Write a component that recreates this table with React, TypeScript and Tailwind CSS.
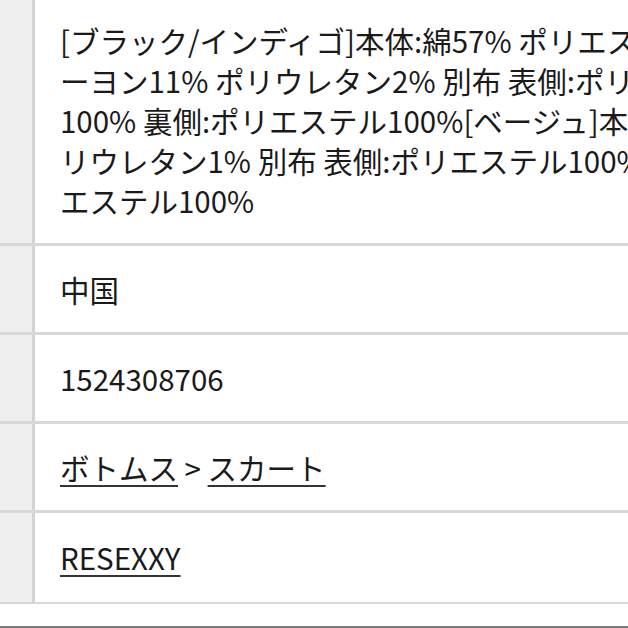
import React from "react";

const material = [
  "[ブラック/インディゴ]本体:綿57% ポリエステル30% レ",
  "ーヨン11% ポリウレタン2% 別布 表側:ポリエステル",
  "100% 裏側:ポリエステル100%[ベージュ]本体:綿70% ポ",
  "リウレタン1% 別布 表側:ポリエステル100% 裏側:ポリ",
  "エステル100%",
];

function Row({ children, last }: { children: React.ReactNode; last?: boolean }) {
  return (
    <div className={`flex ${last ? "border-b-2" : "border-b-[3px]"} border-[#d8d8d8]`}>
      <div className="w-[35px] shrink-0 bg-[#efefef] border-r-[3px] border-[#d4d4d4]" />
      <div
        className={`flex-1 pl-[25px] pr-6 ${last ? "pt-[24px] pb-[25px]" : "py-[23px]"} flex items-center`}
      >
        {children}
      </div>
    </div>
  );
}

const link = "underline decoration-2 underline-offset-[5px] decoration-[#333]";

export default function App() {
  return (
    <div
      className="w-[628px] h-[628px] overflow-hidden bg-white text-[#1a1a1a] text-[29.5px] leading-[40px] flex flex-col"
      style={{ fontFamily: '"Noto Sans CJK JP", "Noto Sans", sans-serif' }}
    >
      <div className="w-[1000px] -mt-[3px] flex flex-col">
        <Row>
          <div className="flex flex-col">
            {material.map((l) => (
              <p key={l} className="whitespace-nowrap">{l}</p>
            ))}
          </div>
        </Row>
        <Row>
          <p>中国</p>
        </Row>
        <Row>
          <p>1524308706</p>
        </Row>
        <Row>
          <p className="whitespace-nowrap">
            <a className={link}>ボトムス</a>
            <span> &gt; </span>
            <a className={link}>スカート</a>
          </p>
        </Row>
        <Row last>
          <a className={link}>RESEXXY</a>
        </Row>
      </div>
      <div className="flex-1" />
      <div className="h-[2px] bg-[#7a7a7a] shrink-0" />
    </div>
  );
}
